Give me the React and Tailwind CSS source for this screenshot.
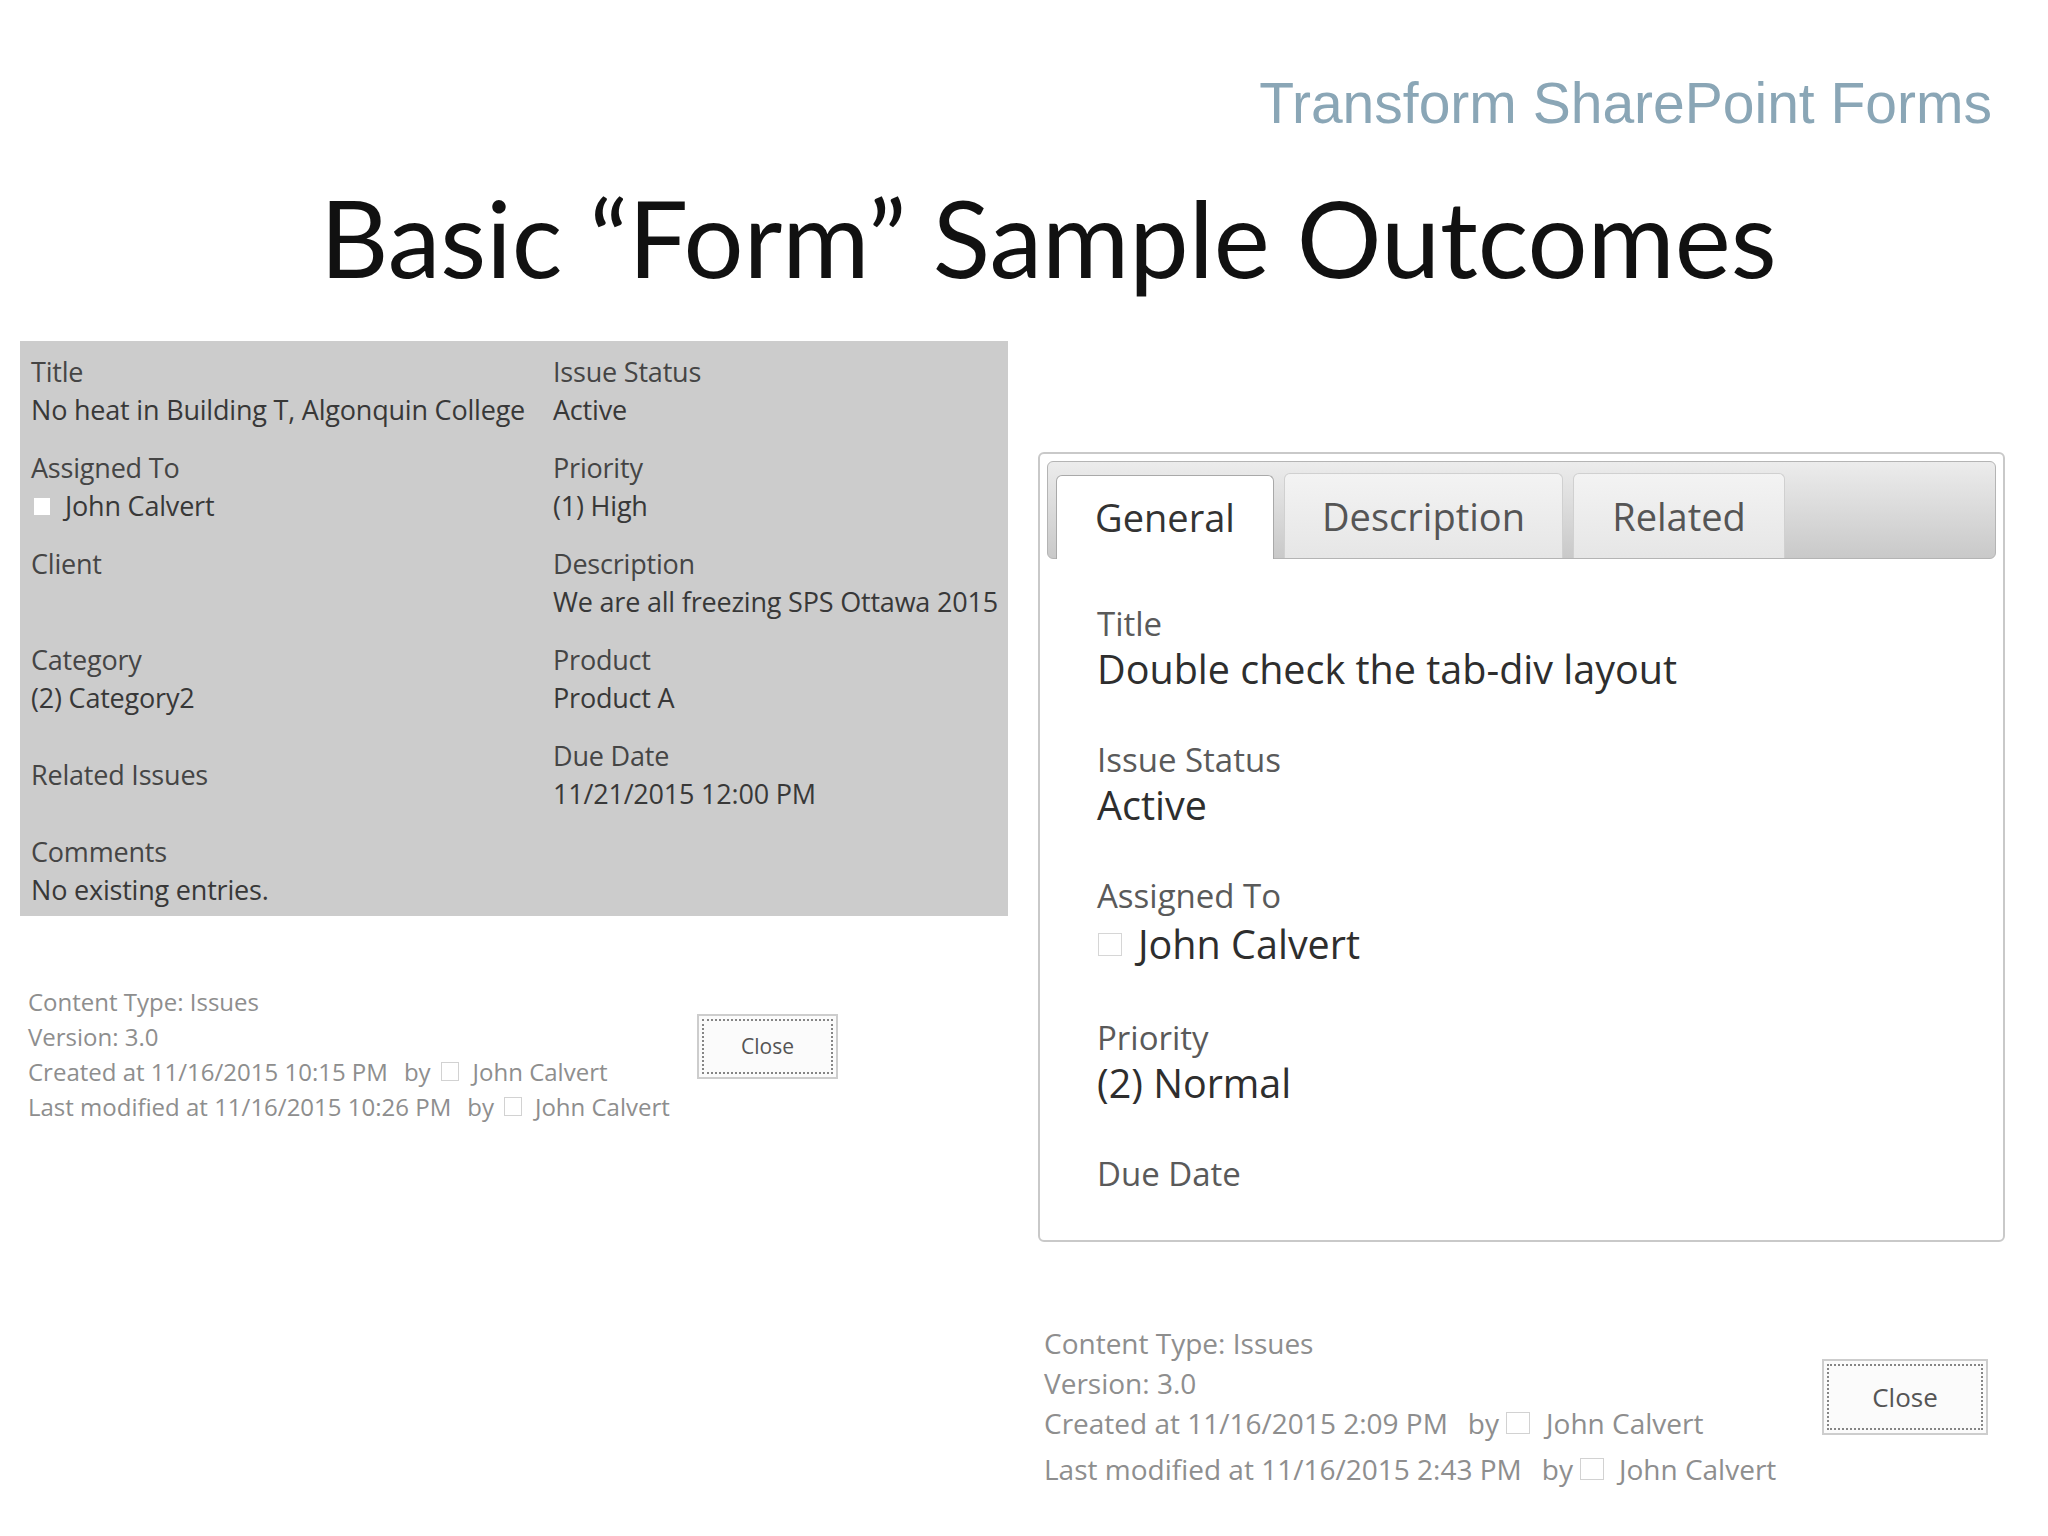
import React from "react";

function LeftField({ label, value, box, center }) {
  return (
    <div className={center ? "self-center" : ""}>
      <div className="text-[#454545]">{label}</div>
      {value !== undefined && (
        <div className="text-[#383838] flex items-center">
          {box && <span className="inline-block w-[16px] h-[17px] bg-white mr-[15px] ml-[3px]" />}
          {value}
        </div>
      )}
    </div>
  );
}

function CloseButton({ small }) {
  return (
    <div
      className={
        small
          ? "w-[141px] h-[65px] border-2 border-[#cdcdcd] bg-[#fbfbfb] p-[3px] mt-[30px]"
          : "w-[166px] h-[76px] border-2 border-[#cdcdcd] bg-[#fbfbfb] p-[3px] mt-[36px]"
      }
    >
      <div
        className={
          small
            ? "w-full h-full border-2 border-dotted border-[#858585] flex items-center justify-center text-[21px] text-[#555]"
            : "w-full h-full border-2 border-dotted border-[#858585] flex items-center justify-center text-[26px] text-[#555]"
        }
      >
        Close
      </div>
    </div>
  );
}

function RightField({ label, value, box, last }) {
  return (
    <div className={last ? "" : "mb-[46px]"}>
      <div className="text-[33px] leading-[44px] text-[#5a5a5a]">{label}</div>
      {value !== undefined && (
        <div
          className={
            box
              ? "text-[39.5px] leading-[52px] text-[#2e2e2e] flex items-center"
              : "text-[39.5px] leading-[46px] text-[#2e2e2e]"
          }
        >
          {box && <span className="inline-block w-[24px] h-[23px] border border-[#d6d6d6] mr-[16px] ml-[1px]" />}
          {value}
        </div>
      )}
    </div>
  );
}

export default function App() {
  return (
    <div className="w-[2048px] h-[1536px] overflow-hidden bg-white relative font-['Open_Sans',sans-serif]">
      {/* header */}
      <div className="flex justify-end pr-[56px] pt-[75px]">
        <div className="font-['Liberation_Sans',Arial,sans-serif] text-[57px] leading-[57px] text-[#8aa6b6]">
          Transform SharePoint Forms
        </div>
      </div>
      {/* title */}
      <div className="pl-[320px] mt-[55px]">
        <div className="font-['Lato',sans-serif] text-[106px] leading-[100px] text-[#111]">
          Basic “Form” Sample Outcomes
        </div>
      </div>

      {/* body */}
      <div className="flex mt-[54px] pl-[20px] gap-[30px]">
        {/* left column */}
        <div className="w-[988px] flex flex-col">
          <div className="bg-[#cccccc] pt-[12px] pb-[7px] pl-[11px] text-[27px] leading-[38px] tracking-[-0.2px]">
            <div className="grid grid-cols-[522px_1fr] gap-y-[20px]">
              <LeftField label="Title" value="No heat in Building T, Algonquin College" />
              <LeftField label="Issue Status" value="Active" />
              <LeftField label="Assigned To" value="John Calvert" box />
              <LeftField label="Priority" value="(1) High" />
              <LeftField label="Client" />
              <LeftField label="Description" value="We are all freezing SPS Ottawa 2015" />
              <LeftField label="Category" value="(2) Category2" />
              <LeftField label="Product" value="Product A" />
              <LeftField label="Related Issues" center />
              <LeftField label="Due Date" value="11/21/2015 12:00 PM" />
              <LeftField label="Comments" value="No existing entries." />
              <div />
            </div>
          </div>

          <div className="flex items-start mt-[68px] pl-[8px]">
            <div className="w-[669px] text-[24px] leading-[35px] text-[#8e8e8e]">
              <div>Content Type: Issues</div>
              <div>Version: 3.0</div>
              <div className="flex items-center">
                <span>Created at 11/16/2015 10:15 PM</span>
                <span className="ml-[16px]">by</span>
                <span className="inline-block w-[18px] h-[19px] border border-[#d2d2d2] ml-[10px]" />
                <span className="ml-[14px]">John Calvert</span>
              </div>
              <div className="flex items-center">
                <span>Last modified at 11/16/2015 10:26 PM</span>
                <span className="ml-[16px]">by</span>
                <span className="inline-block w-[18px] h-[19px] border border-[#d2d2d2] ml-[10px]" />
                <span className="ml-[13px]">John Calvert</span>
              </div>
            </div>
            <CloseButton small />
          </div>
        </div>

        {/* right column */}
        <div className="w-[967px] flex flex-col pt-[111px]">
          <div className="h-[790px] border-2 border-[#c9c9c9] rounded-[6px] p-[7px] bg-white">
            <div className="h-[98px] rounded-[6px] border border-[#b4b4b4] bg-linear-to-b from-[#ececec] to-[#c9c9c9] flex items-end gap-[10px] pl-[8px]">
              <div className="w-[218px] h-[84px] -mb-px relative z-10 bg-white border border-b-0 border-[#a9a9a9] rounded-t-[6px] flex items-center justify-center text-[38px] text-[#333]">
                General
              </div>
              <div className="w-[279px] h-[85px] bg-linear-to-b from-[#f3f3f3] to-[#e6e6e6] border border-b-0 border-[#d0d0d0] rounded-t-[6px] flex items-center justify-center text-[38px] text-[#555]">
                Description
              </div>
              <div className="w-[212px] h-[85px] bg-linear-to-b from-[#f3f3f3] to-[#e6e6e6] border border-b-0 border-[#d0d0d0] rounded-t-[6px] flex items-center justify-center text-[38px] text-[#555]">
                Related
              </div>
            </div>
            <div className="pl-[50px] pt-[43px]">
              <RightField label="Title" value="Double check the tab-div layout" />
              <RightField label="Issue Status" value="Active" />
              <RightField label="Assigned To" value="John Calvert" box />
              <RightField label="Priority" value="(2) Normal" />
              <RightField label="Due Date" last />
            </div>
          </div>

          <div className="flex items-start mt-[81px] pl-[6px]">
            <div className="w-[778px] text-[28px] leading-[40px] text-[#8e8e8e]">
              <div>Content Type: Issues</div>
              <div>Version: 3.0</div>
              <div className="flex items-center">
                <span>Created at 11/16/2015 2:09 PM</span>
                <span className="ml-[20px]">by</span>
                <span className="inline-block w-[24px] h-[22px] border border-[#d2d2d2] ml-[7px]" />
                <span className="ml-[16px]">John Calvert</span>
              </div>
              <div className="flex items-center mt-[6px]">
                <span>Last modified at 11/16/2015 2:43 PM</span>
                <span className="ml-[20px]">by</span>
                <span className="inline-block w-[24px] h-[22px] border border-[#d2d2d2] ml-[7px]" />
                <span className="ml-[15px]">John Calvert</span>
              </div>
            </div>
            <CloseButton />
          </div>
        </div>
      </div>
    </div>
  );
}
